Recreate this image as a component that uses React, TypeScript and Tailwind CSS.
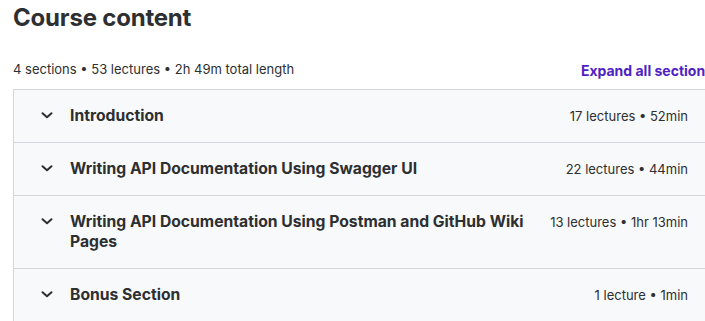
import React from "react";

const sections = [
  { title: "Introduction", summary: "17 lectures • 52min" },
  { title: "Writing API Documentation Using Swagger UI", summary: "22 lectures • 44min" },
  { title: "Writing API Documentation Using Postman and GitHub Wiki Pages", summary: "13 lectures • 1hr 13min" },
  { title: "Bonus Section", summary: "1 lecture • 1min" },
];

function Chevron() {
  return (
    <svg width="16" height="16" viewBox="0 0 16 16" fill="none" className="shrink-0">
      <path d="M4.5 7.2 L9 11.3 L13.5 7.2" stroke="#2d2f31" strokeWidth="2" strokeLinecap="round" strokeLinejoin="round" />
    </svg>
  );
}

export default function App() {
  return (
    <div className="w-[705px] h-[321px] overflow-hidden bg-white" style={{ fontFamily: "Inter, 'Noto Sans', sans-serif" }}>
      <div className="w-[713px] pl-[13px] pt-[3px] text-[#2d2f31]">
        <h2 className="text-[24px] font-bold leading-[30px] tracking-[-0.2px]">Course content</h2>
        <div className="mt-[26px] flex items-center justify-between h-[22px] mb-[8px]">
          <span className="text-[13px]">4 sections • 53 lectures • 2h 49m total length</span>
          <span className="text-[14px] font-bold text-[#5022c3] whitespace-nowrap">Expand all sections</span>
        </div>
        <div className="border border-[#d1d7dc] border-b-0">
          {sections.map((s) => (
            <div key={s.title} className="flex items-start bg-[#f7f9fa] border-b border-[#d1d7dc] px-6 py-4">
              <Chevron />
              <div className="flex-1 ml-4 text-[15.7px] font-bold leading-[20px]">{s.title}</div>
              <div className="ml-6 text-[13px] leading-[20px] whitespace-nowrap">{s.summary}</div>
            </div>
          ))}
        </div>
      </div>
    </div>
  );
}
